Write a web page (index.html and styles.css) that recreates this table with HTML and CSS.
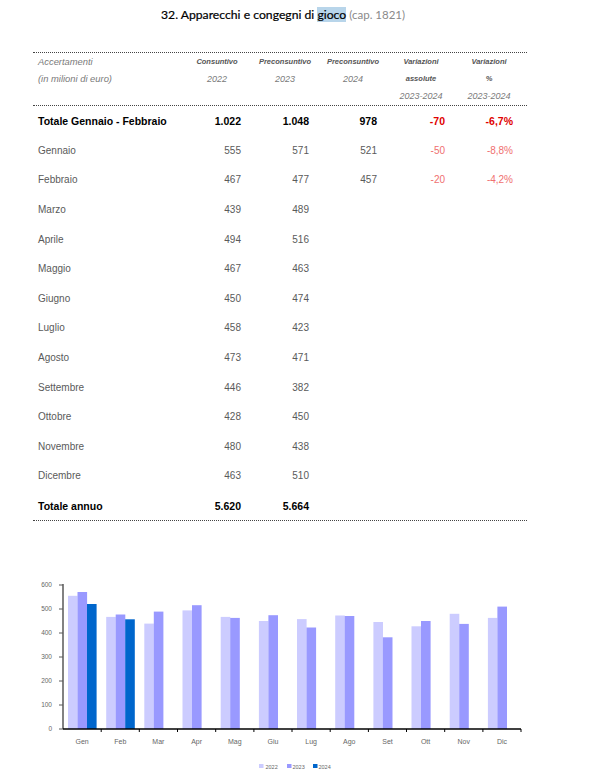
FILE: index.html
```html
<!DOCTYPE html>
<html lang="it">
<head>
    <meta charset="UTF-8">
    <meta name="viewport" content="width=device-width, initial-scale=1.0">
    <title>Apparecchi e congegni di gioco</title>
    <link rel="stylesheet" href="styles.css">
</head>
<body>
    <h1 class="titolo">32. Apparecchi e congegni di <span class="sel">gioco</span> <span class="cap">(cap. 1821)</span></h1>

    <!-- Tabella accertamenti -->
    <section class="tavola">
        <div class="testata">
            <div class="hriga">
                <span class="etichetta">Accertamenti</span>
                <span class="forte">Consuntivo</span>
                <span class="forte">Preconsuntivo</span>
                <span class="forte">Preconsuntivo</span>
                <span class="forte">Variazioni</span>
                <span class="forte">Variazioni</span>
            </div>
            <div class="hriga">
                <span class="etichetta">(in milioni di euro)</span>
                <span>2022</span>
                <span>2023</span>
                <span>2024</span>
                <span class="forte">assolute</span>
                <span class="forte">%</span>
            </div>
            <div class="hriga">
                <span class="etichetta"></span>
                <span></span>
                <span></span>
                <span></span>
                <span>2023-2024</span>
                <span>2023-2024</span>
            </div>
        </div>

        <div class="righe">
            <div class="riga totale">
                <span class="mese">Totale Gennaio - Febbraio</span>
                <span>1.022</span><span>1.048</span><span>978</span>
                <span class="neg">-70</span><span class="neg">-6,7%</span>
            </div>
            <div class="riga">
                <span class="mese">Gennaio</span>
                <span>555</span><span>571</span><span>521</span>
                <span class="neg">-50</span><span class="neg">-8,8%</span>
            </div>
            <div class="riga">
                <span class="mese">Febbraio</span>
                <span>467</span><span>477</span><span>457</span>
                <span class="neg">-20</span><span class="neg">-4,2%</span>
            </div>
            <div class="riga"><span class="mese">Marzo</span><span>439</span><span>489</span><span></span><span></span><span></span></div>
            <div class="riga"><span class="mese">Aprile</span><span>494</span><span>516</span><span></span><span></span><span></span></div>
            <div class="riga"><span class="mese">Maggio</span><span>467</span><span>463</span><span></span><span></span><span></span></div>
            <div class="riga"><span class="mese">Giugno</span><span>450</span><span>474</span><span></span><span></span><span></span></div>
            <div class="riga"><span class="mese">Luglio</span><span>458</span><span>423</span><span></span><span></span><span></span></div>
            <div class="riga"><span class="mese">Agosto</span><span>473</span><span>471</span><span></span><span></span><span></span></div>
            <div class="riga"><span class="mese">Settembre</span><span>446</span><span>382</span><span></span><span></span><span></span></div>
            <div class="riga"><span class="mese">Ottobre</span><span>428</span><span>450</span><span></span><span></span><span></span></div>
            <div class="riga"><span class="mese">Novembre</span><span>480</span><span>438</span><span></span><span></span><span></span></div>
            <div class="riga"><span class="mese">Dicembre</span><span>463</span><span>510</span><span></span><span></span><span></span></div>
            <div class="riga totale">
                <span class="mese">Totale annuo</span>
                <span>5.620</span><span>5.664</span><span></span><span></span><span></span>
            </div>
        </div>
    </section>

    <!-- Grafico mensile -->
    <div class="grafico">
        <svg width="596" height="204" viewBox="0 0 596 204">
            <!-- asse y -->
            <g class="ylab">
                <text x="52" y="10">600</text>
                <text x="52" y="34">500</text>
                <text x="52" y="58">400</text>
                <text x="52" y="82">300</text>
                <text x="52" y="106">200</text>
                <text x="52" y="130">100</text>
                <text x="52" y="154">0</text>
            </g>
            <g class="ytick">
                <line x1="59" y1="10" x2="63" y2="10"/>
                <line x1="59" y1="34" x2="63" y2="34"/>
                <line x1="59" y1="58" x2="63" y2="58"/>
                <line x1="59" y1="82" x2="63" y2="82"/>
                <line x1="59" y1="106" x2="63" y2="106"/>
                <line x1="59" y1="130" x2="63" y2="130"/>
                <line x1="59" y1="154" x2="63" y2="154"/>
            </g>

            <!-- barre 2022 -->
            <g fill="#ccccff">
                <rect x="68" y="20.8" width="9.6" height="133.2"/>
                <rect x="106.2" y="41.9" width="9.6" height="112.1"/>
                <rect x="144.3" y="48.6" width="9.6" height="105.4"/>
                <rect x="182.5" y="35.4" width="9.6" height="118.6"/>
                <rect x="220.7" y="41.9" width="9.6" height="112.1"/>
                <rect x="258.9" y="46" width="9.6" height="108"/>
                <rect x="297" y="44.1" width="9.6" height="109.9"/>
                <rect x="335.2" y="40.5" width="9.6" height="113.5"/>
                <rect x="373.4" y="47" width="9.6" height="107"/>
                <rect x="411.5" y="51.3" width="9.6" height="102.7"/>
                <rect x="449.7" y="38.8" width="9.6" height="115.2"/>
                <rect x="487.9" y="42.9" width="9.6" height="111.1"/>
            </g>
            <!-- barre 2023 -->
            <g fill="#9999ff">
                <rect x="77.5" y="17" width="9.6" height="137"/>
                <rect x="115.7" y="39.5" width="9.6" height="114.5"/>
                <rect x="153.8" y="36.6" width="9.6" height="117.4"/>
                <rect x="192" y="30.2" width="9.6" height="123.8"/>
                <rect x="230.2" y="42.9" width="9.6" height="111.1"/>
                <rect x="268.4" y="40.2" width="9.6" height="113.8"/>
                <rect x="306.5" y="52.5" width="9.6" height="101.5"/>
                <rect x="344.7" y="41" width="9.6" height="113"/>
                <rect x="382.9" y="62.3" width="9.6" height="91.7"/>
                <rect x="421" y="46" width="9.6" height="108"/>
                <rect x="459.2" y="48.9" width="9.6" height="105.1"/>
                <rect x="497.4" y="31.6" width="9.6" height="122.4"/>
            </g>
            <!-- barre 2024 -->
            <g fill="#0066cc">
                <rect x="87" y="29" width="9.6" height="125"/>
                <rect x="125.2" y="44.3" width="9.6" height="109.7"/>
            </g>

            <line class="asse-y" x1="63" y1="9" x2="63" y2="154"/>
            <line class="asse-x" x1="63" y1="154" x2="521" y2="154"/>
            <g class="xtick">
                <line x1="101.2" y1="154" x2="101.2" y2="157"/>
                <line x1="139.3" y1="154" x2="139.3" y2="157"/>
                <line x1="177.5" y1="154" x2="177.5" y2="157"/>
                <line x1="215.7" y1="154" x2="215.7" y2="157"/>
                <line x1="253.9" y1="154" x2="253.9" y2="157"/>
                <line x1="292" y1="154" x2="292" y2="157"/>
                <line x1="330.2" y1="154" x2="330.2" y2="157"/>
                <line x1="368.4" y1="154" x2="368.4" y2="157"/>
                <line x1="406.5" y1="154" x2="406.5" y2="157"/>
                <line x1="444.7" y1="154" x2="444.7" y2="157"/>
                <line x1="482.9" y1="154" x2="482.9" y2="157"/>
                <line x1="521" y1="154" x2="521" y2="157"/>
            </g>
            <g class="xlab">
                <text x="82.1" y="169">Gen</text>
                <text x="120.3" y="169">Feb</text>
                <text x="158.4" y="169">Mar</text>
                <text x="196.6" y="169">Apr</text>
                <text x="234.8" y="169">Mag</text>
                <text x="273" y="169">Giu</text>
                <text x="311.1" y="169">Lug</text>
                <text x="349.3" y="169">Ago</text>
                <text x="387.5" y="169">Set</text>
                <text x="425.6" y="169">Ott</text>
                <text x="463.8" y="169">Nov</text>
                <text x="502" y="169">Dic</text>
            </g>

            <!-- legenda -->
            <g class="legenda">
                <rect x="259" y="189" width="4.5" height="4" fill="#ccccff"/>
                <text x="265.5" y="193.5">2022</text>
                <rect x="287" y="189" width="4.5" height="4" fill="#9999ff"/>
                <text x="292.5" y="193.5">2023</text>
                <rect x="313" y="189" width="4.5" height="4" fill="#0066cc"/>
                <text x="318.5" y="193.5">2024</text>
            </g>
        </svg>
    </div>
</body>
</html>
```

FILE: styles.css
```css
body {
    margin: 0;
    background-color: #ffffff;
    font-family: "Liberation Sans", Arial, sans-serif;
    color: #555555;
}

.titolo {
    margin: 0;
    height: 52px;
    box-sizing: border-box;
    padding: 7px 0 0 161px;
    font-family: Lato, "Liberation Sans", sans-serif;
    font-size: 12.2px;
    font-weight: 400;
    line-height: 16px;
    color: #000000;
    -webkit-text-stroke: 0.2px #000000;
}
.sel {
    background-color: #b8d5ea;
}
.cap {
    color: #8a8a8a;
    font-size: 11.5px;
    -webkit-text-stroke: 0;
}

.tavola {
    margin-left: 33px;
    width: 494px;
    border-top: 1px dotted #444444;
    border-bottom: 1px dotted #444444;
}
.testata {
    height: 52px;
    border-bottom: 1px dotted #444444;
}
.hriga {
    display: grid;
    grid-template-columns: 150px repeat(5, 68px);
    height: 17.33px;
    align-items: center;
    font-size: 9px;
    font-style: italic;
    color: #7a7a7a;
}
.hriga span {
    text-align: center;
}
.hriga .etichetta {
    text-align: left;
    padding-left: 5px;
    font-size: 9.4px;
}
.hriga .forte {
    font-weight: bold;
    font-size: 7.5px;
    color: #555555;
}

.riga {
    display: grid;
    grid-template-columns: 150px repeat(5, 68px);
    height: 29.6px;
    align-items: center;
    font-size: 10px;
    color: #5a5a5a;
}
.riga span {
    text-align: right;
    padding-right: 10px;
}
.riga .mese {
    text-align: left;
    padding-left: 5px;
    padding-right: 0;
}
.riga .neg {
    color: #f07070;
}
.totale {
    font-weight: bold;
    font-size: 10.5px;
    color: #000000;
}
.totale .neg {
    color: #e00000;
}

.grafico {
    margin-top: 54px;
}
.grafico svg {
    display: block;
    font-family: "Liberation Sans", Arial, sans-serif;
}
.ylab text {
    font-size: 6.5px;
    fill: #666666;
    text-anchor: end;
    dominant-baseline: middle;
}
.ytick line {
    stroke: #595959;
    stroke-width: 1;
}
.asse-y {
    stroke: #595959;
    stroke-width: 1.5;
}
.asse-x {
    stroke: #000000;
    stroke-width: 1.5;
}
.xtick line {
    stroke: #000000;
    stroke-width: 1;
}
.xlab text {
    font-size: 7px;
    fill: #666666;
    text-anchor: middle;
}
.legenda text {
    font-size: 5.5px;
    fill: #666666;
}
```
